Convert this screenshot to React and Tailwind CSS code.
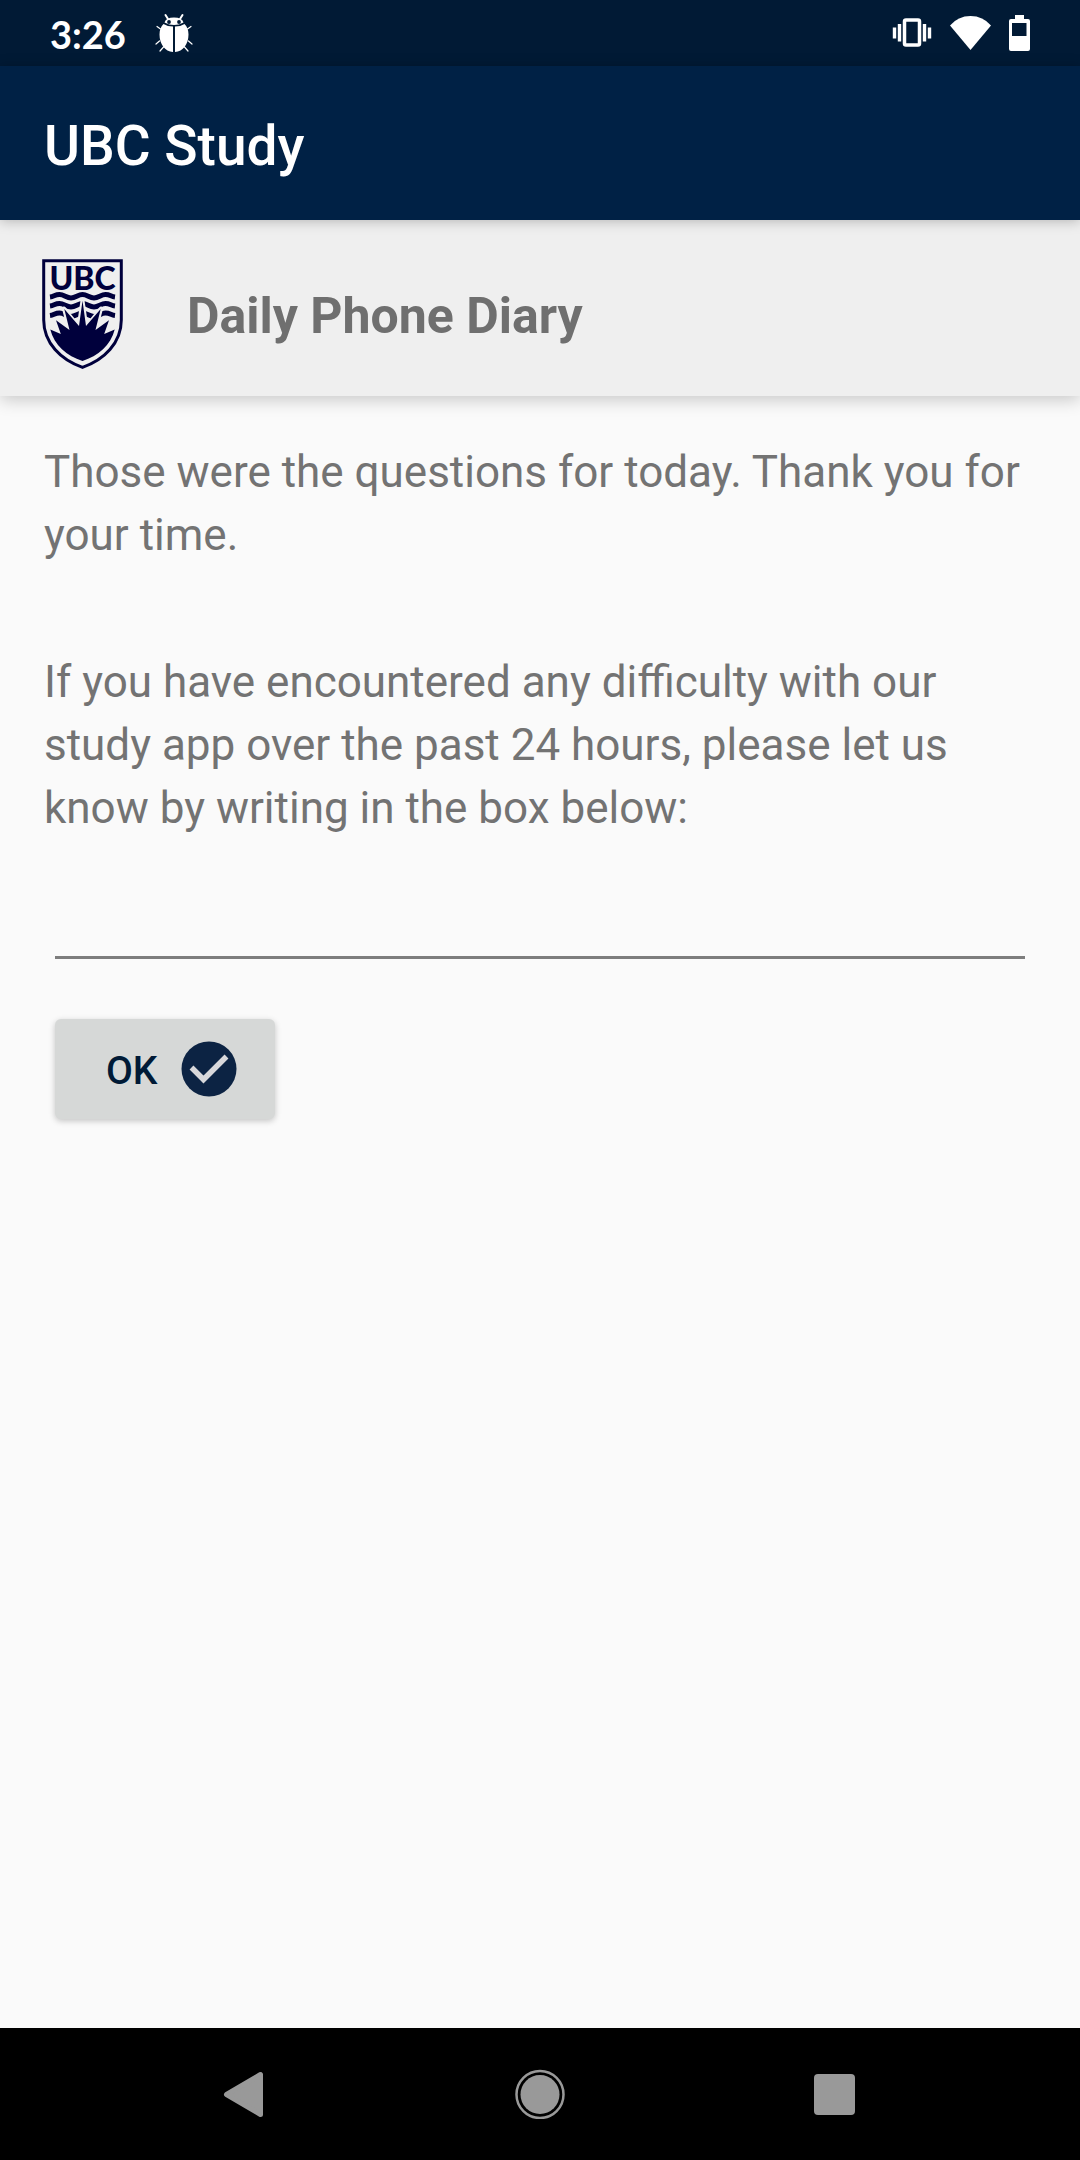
import { useState } from "react";

function BugIcon() {
  return (
    <svg viewBox="0 0 40 40" className="size-10" aria-hidden="true">
      <g stroke="#fff" fill="none" strokeLinecap="round">
        <path d="M14 6 11.500 2M26 6 28.500 2" strokeWidth="2" />
        <path d="M6.500 16 3 13.500M33.500 16 37 13.500M5.500 28 2 31M34.500 28 38 31M9.500 34 6 38M30.500 34 34 38" strokeWidth="1.200" />
      </g>
      <path d="M10.500 9.500Q12 4.500 20 4.500T29.500 9.500Q25 12 20 12T10.500 9.500Z" fill="#fff" />
      <circle cx="15" cy="9" r="1.900" fill="#011a35" />
      <circle cx="25" cy="9" r="1.900" fill="#011a35" />
      <path d="M19 13.500V39C11 38.500 5.500 31 5.500 21.500C5.500 17 7 13.500 9.500 11Q13.500 13.500 19 13.500ZM21 13.500V39C29 38.500 34.500 31 34.500 21.500C34.500 17 33 13.500 30.500 11Q26.500 13.500 21 13.500Z" fill="#fff" />
    </svg>
  );
}

function StatusIcons() {
  return (
    <div className="flex items-center gap-[17px]">
      <svg viewBox="0 0 40 40" className="size-10" aria-hidden="true">
        <rect x="12.500" y="7" width="15" height="25" rx="1.500" fill="none" stroke="#fff" strokeWidth="3.500" />
        <path d="M7.500 11V28.500M2.500 14.500V25.500M32.500 11V28.500M37.500 14.500V25.500" stroke="#fff" strokeWidth="3.400" />
      </svg>
      <svg viewBox="0 0 42 36" className="h-9 w-[42px]" aria-hidden="true">
        <path d="M1 10.500Q9 1 21.500 1T42 10.500L21.500 35Z" fill="#fff" />
      </svg>
      <svg viewBox="0 0 22 36" className="h-9 w-[22px]" aria-hidden="true">
        <path fillRule="evenodd" d="M7 0H16V4H20Q22 4 22 6V34Q22 36 20 36H3Q1 36 1 34V6Q1 4 3 4H7ZM4 8V21H18.500V8Z" fill="#fff" />
      </svg>
    </div>
  );
}

function UbcCrest() {
  return (
    <svg viewBox="0 0 82 111" className="h-[111px] w-[82px] shrink-0 overflow-visible" role="img" aria-label="UBC crest">
      <path d="M1.700 1.700H79.300V61C79.300 84 62 101 40.500 108.300C19 101 1.700 84 1.700 61Z" fill="none" stroke="#00003c" strokeWidth="3" />
      <text x="40.500" y="31" textAnchor="middle" fontSize="32" fontWeight="900" fill="#00003c" className="font-['Lato',sans-serif]">UBC</text>
      <g fill="none" stroke="#00003c" strokeWidth="5">
        <path d="M8 38C12 37.500 13 35.500 17.500 35.500S24.500 39 29 39S36 35.500 40.500 35.500S47.500 39 52 39S59 35.500 63.500 35.500S69 37.500 73 38" />
        <path d="M8 47C12 46.500 13 44.500 17.500 44.500S24.500 48 29 48S36 44.500 40.500 44.500S47.500 48 52 48S59 44.500 63.500 44.500S69 46.500 73 47" />
        <path d="M8 56.500C12 56 13 54 17.500 54S24.500 57.500 29 57.500S36 54 40.500 54S47.500 57.500 52 57.500S59 54 63.500 54S69 56 73 56.500" />
      </g>
      <path d="M37 66L40.500 41.500L44 66ZM27.500 71L22 49.500L36 67ZM53.500 71L59 49.500L45 67Z" fill="#efefef" stroke="#efefef" strokeWidth="4" strokeLinejoin="round" />
      <path d="M8.300 70.500L18.800 75L14 61.300L27.500 71L22.300 50L37 67L40.500 41.700L44 67L58.700 50L53.500 71L67 61.300L62.200 75L72.700 70.500C69 86 56 97 40.500 102C25 97 12 86 8.300 70.500Z" fill="#00003c" />
    </svg>
  );
}

export default function App() {
  const [feedback, setFeedback] = useState("");

  return (
    <div className="flex min-h-screen flex-col bg-[#fafafa] font-['Roboto',sans-serif] text-[#737373]">
      <div className="flex h-[66px] items-center justify-between bg-[#011a35] pr-[50px] pl-[50px] text-white">
        <div className="flex items-center gap-7">
          <span className="pt-0.5 font-['Lato',sans-serif] text-[38px] leading-[44px] font-bold">3:26</span>
          <BugIcon />
        </div>
        <StatusIcons />
      </div>
      <header className="relative z-20 flex h-[154px] items-center bg-[#002145] px-11 pt-1.5 text-white shadow-[0_1px_12px_rgba(0,0,0,0.25)]">
        <h1 className="text-[55px] leading-[64px] font-medium">UBC Study</h1>
      </header>
      <section className="relative z-10 flex h-44 items-center gap-[63px] bg-[#efefef] px-[42px] pt-3 shadow-[0_4px_16px_rgba(0,0,0,0.2)]">
        <UbcCrest />
        <h2 className="pt-1 text-[50px] leading-[58px] font-bold text-[#6f6f6f]">Daily Phone Diary</h2>
      </section>
      <main className="flex flex-1 flex-col items-start px-11 pt-[45px]">
        <p className="text-[44px] leading-[63px]">
          Those were the questions for today. Thank you for your time.
        </p>
        <label htmlFor="feedback" className="mt-[84px] text-[44px] leading-[63px]">
          If you have encountered any difficulty with our study app over the past 24 hours, please let us know by writing in the box below:
        </label>
        <div className="w-full px-[11px] pt-[35px]">
          <input
            id="feedback"
            value={feedback}
            onChange={(event) => setFeedback(event.target.value)}
            className="block h-[84px] w-full border-b-3 border-[#7d7d7d] bg-transparent text-[44px] text-black outline-none"
          />
        </div>
        <button
          type="button"
          className="mt-[60px] ml-[11px] flex h-[100px] items-center gap-[23px] rounded-md bg-[#d6d8d7] pr-[38px] pl-[51px] text-[39px] leading-[46px] font-medium text-[#001a36] shadow-[0_2px_6px_rgba(0,0,0,0.22)]"
        >
          <span className="pt-1">OK</span>
          <svg viewBox="0 0 56 56" className="size-14" aria-hidden="true">
            <circle cx="28" cy="28" r="27.500" fill="#0c2343" />
            <path d="M10.500 26.500L22.500 38.500L45.500 15.500" fill="none" stroke="#d8d8db" strokeWidth="5.500" />
          </svg>
        </button>
      </main>
      <nav className="flex h-[132px] items-center justify-center gap-[245px] bg-black" aria-label="System navigation">
        <button type="button" aria-label="Back">
          <svg viewBox="0 0 50 50" className="size-[50px]" aria-hidden="true">
            <path d="M6.500 25.500L40.500 5.500V45.500Z" fill="#999" stroke="#999" strokeWidth="5" strokeLinejoin="round" />
          </svg>
        </button>
        <button type="button" aria-label="Home">
          <svg viewBox="0 0 50 50" className="size-[50px]" aria-hidden="true">
            <circle cx="25" cy="25.500" r="23.500" fill="none" stroke="#999" strokeWidth="2.500" />
            <circle cx="25" cy="25.500" r="19.500" fill="#999" />
          </svg>
        </button>
        <button type="button" aria-label="Overview">
          <svg viewBox="0 0 50 50" className="size-[50px]" aria-hidden="true">
            <rect x="4" y="5" width="41" height="41" rx="4" fill="#999" />
          </svg>
        </button>
      </nav>
    </div>
  );
}
